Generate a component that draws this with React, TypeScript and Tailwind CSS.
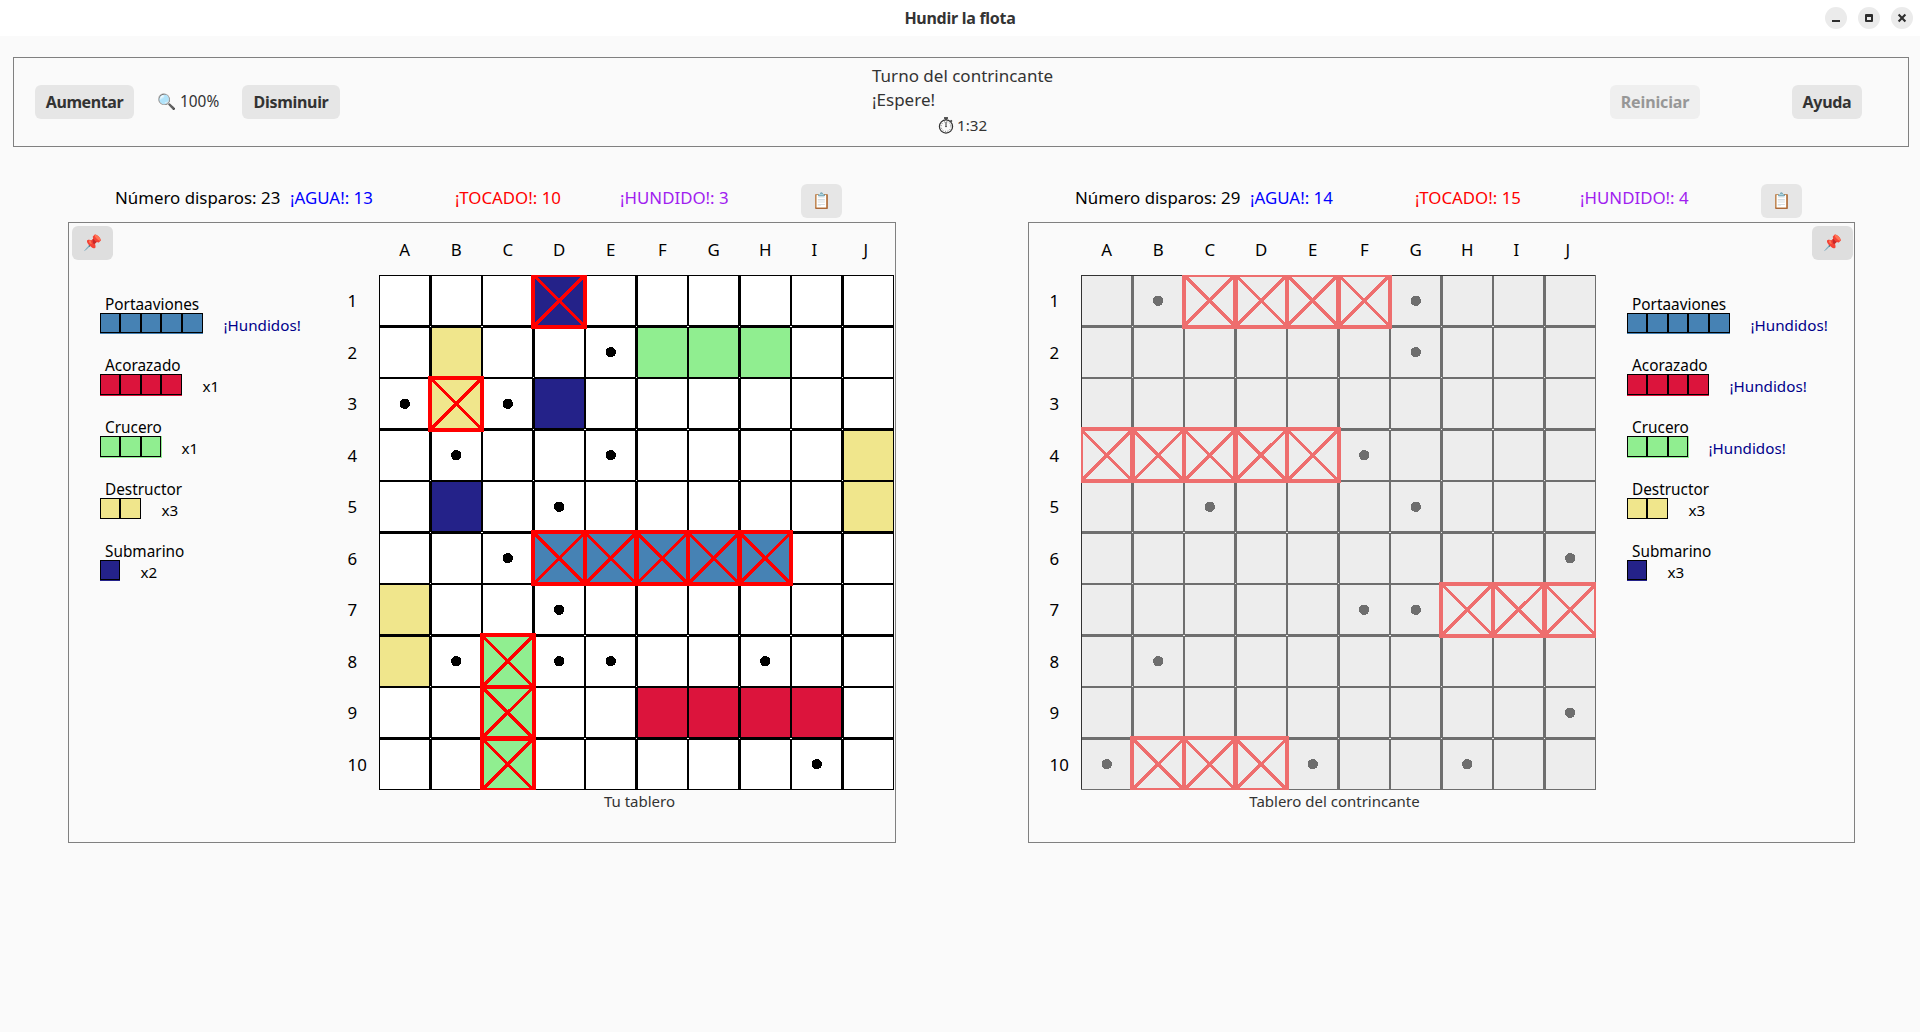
import React from "react";

type Cell = { c: number; r: number };
type Ship = { name: string; size: number; color: string; status: string };
type Board = {
  ships: (Cell & { color: string })[];
  hits: Cell[];
  waters: Cell[];
};

const P = 51.5;
const COLORS = { carrier: "#4682b4", battle: "#dc143c", cruiser: "#90ee90", destroyer: "#f0e68c", sub: "#242289" };

// "D6" -> column 3, row 5
const at = (s: string): Cell => ({ c: s.charCodeAt(0) - 65, r: parseInt(s.slice(1), 10) - 1 });
const cells = (s: string) => s.split(" ").map(at);
const paint = (s: string, color: string) => cells(s).map((x) => ({ ...x, color }));

const own: Board = {
  ships: [
    ...paint("D1 D3 B5", COLORS.sub),
    ...paint("B2 B3 J4 J5 A7 A8", COLORS.destroyer),
    ...paint("F2 G2 H2 C8 C9 C10", COLORS.cruiser),
    ...paint("D6 E6 F6 G6 H6", COLORS.carrier),
    ...paint("F9 G9 H9 I9", COLORS.battle),
  ],
  hits: cells("D1 B3 D6 E6 F6 G6 H6 C8 C9 C10"),
  waters: cells("E2 A3 C3 B4 E4 D5 C6 D7 B8 D8 E8 H8 I10"),
};

const rival: Board = {
  ships: [],
  hits: cells("C1 D1 E1 F1 A4 B4 C4 D4 E4 H7 I7 J7 B10 C10 D10"),
  waters: cells("B1 G1 G2 F4 C5 G5 J6 F7 G7 B8 J9 A10 E10 H10"),
};

const fleet = (st: string[]): Ship[] => [
  { name: "Portaaviones", size: 5, color: COLORS.carrier, status: st[0] },
  { name: "Acorazado", size: 4, color: COLORS.battle, status: st[1] },
  { name: "Crucero", size: 3, color: COLORS.cruiser, status: st[2] },
  { name: "Destructor", size: 2, color: COLORS.destroyer, status: st[3] },
  { name: "Submarino", size: 1, color: COLORS.sub, status: st[4] },
];

function Grid({ board, dim }: { board: Board; dim?: boolean }) {
  const line = dim ? "#6e6e6e" : "#000000";
  const red = dim ? "#ee6e6e" : "#ff0000";
  const inner = [1, 2, 3, 4, 5, 6, 7, 8, 9];
  const odd = [1, 3, 5, 7, 9];
  return (
    <svg width="515" height="515" viewBox="0 0 515 515" shapeRendering="crispEdges" className="block shrink-0">
      <rect width="515" height="515" fill={dim ? "#ededed" : "#ffffff"} />
      {board.ships.map((s) => (
        <rect key={`${s.c}-${s.r}`} x={s.c * P} y={s.r * P} width={P} height={P} fill={s.color} />
      ))}
      {inner.map((i) => {
        const w = i % 2 ? 3 : 2;
        const o = Math.floor(i * P) - 1;
        return (
          <g key={i} fill={line}>
            <rect x={o} y="0" width={w} height="515" />
            <rect x="0" y={o} width="515" height={w} />
          </g>
        );
      })}
      <path d="M0 0.5H515M0.5 0V515" stroke={dim ? "#333333" : "#000000"} fill="none" />
      <path d="M514.5 0V515M0 514.5H515" stroke={line} fill="none" />
      {odd.map((j) =>
        inner.map((i) => (
          <g key={`${i}-${j}`} fill={dim ? "#ededed" : "#ffffff"}>
            <rect x={Math.floor(i * P) - (i % 2 ? 0 : 1)} y={Math.floor(j * P)} width={i % 2 ? 1 : 2} height="1" />
            {i % 2 === 0 && <rect x={Math.floor(j * P)} y={i * P - 1} width="1" height="1" />}
          </g>
        )),
      )}
      {board.waters.map((m) => (
        <circle key={`${m.c}-${m.r}`} cx={m.c * P + 25.7} cy={m.r * P + 25.7} r="5.2" fill={line} />
      ))}
      <g stroke={red} fill="none">
        {board.hits.map((h) => (
          <g key={`${h.c}-${h.r}`}>
            <rect x={Math.floor(h.c * P)} y={Math.floor(h.r * P)} width={P} height={P} strokeWidth="4" />
            <path d={`M${h.c * P} ${h.r * P}l${P} ${P}m0 -${P}l-${P} ${P}`} strokeWidth="3.5" />
          </g>
        ))}
      </g>
    </svg>
  );
}

function Button({ children, className = "" }: { children: React.ReactNode; className?: string }) {
  return (
    <button className={`flex h-[34px] shrink-0 items-center justify-center rounded-[6px] text-[16px] font-bold ${className}`}>
      {children}
    </button>
  );
}

const SPANS = [0, 20, 41, 61, 82, 103];
const HEIGHTS = [0, 20, 21, 21, 21, 20];

function Hull({ size, color }: { size: number; color: string }) {
  const h = HEIGHTS[size];
  return (
    <svg width={SPANS[size] + 1} height="22" shapeRendering="crispEdges" className="shrink-0">
      <rect width={SPANS[size] + (size === 3 ? 1 : 0)} height={size === 2 ? h : h + 1} fill={color} />
      {Array.from({ length: size }, (_, i) => (
        <rect
          key={i}
          x={SPANS[i] + 0.5}
          y="0.5"
          width={SPANS[i + 1] - SPANS[i] - 1}
          height={h - 1}
          fill="none"
          stroke="#000"
        />
      ))}
    </svg>
  );
}

function Fleet({ ships }: { ships: Ship[] }) {
  return (
    <div className="flex flex-col text-[15.35px] text-black">
      {ships.map((s) => (
        <div key={s.name} className="flex h-[62px] flex-col first:h-[61px]">
          <div className="h-[19px] pl-[5px] leading-[21px] whitespace-nowrap">{s.name}</div>
          <div className="flex">
            <Hull size={s.size} color={s.color} />
            <span
              className={`pl-[19.5px] text-[15.2px] leading-[24px] whitespace-nowrap ${s.status.startsWith("x") ? "" : "text-[#00008b]"}`}
            >
              {s.status}
            </span>
          </div>
        </div>
      ))}
    </div>
  );
}

function BoardWithLabels({ board, dim, caption }: { board: Board; dim?: boolean; caption: string }) {
  return (
    <div className="flex w-[548px] shrink-0 flex-col">
      <div className="flex h-[52px] pl-[33px] text-[16.85px] text-black">
        {"ABCDEFGHIJ".split("").map((l, i) => (
          <div key={l} className={`w-[51.5px] shrink-0 pt-[15px] text-center leading-[24px] ${i > 7 ? "pr-[5px]" : ""}`}>
            {l}
          </div>
        ))}
      </div>
      <div className="flex">
        <div className="flex w-[33px] shrink-0 flex-col text-[16.85px] text-black">
          {Array.from({ length: 10 }, (_, i) => (
            <div key={i} className="flex h-[51.5px] items-center pl-[1.5px]">{i + 1}</div>
          ))}
        </div>
        <Grid board={board} dim={dim} />
      </div>
      <div className={`h-[24px] text-center text-[15px] leading-[23px] text-[#333333] ${dim ? "pl-[25px]" : "pl-[39px]"}`}>
        {caption}
      </div>
    </div>
  );
}

function EmojiButton({ glyph, className }: { glyph: string; className: string }) {
  return (
    <Button className={`w-[41px] pb-[2px] ${className}`}>
      <span className="text-[15.2px] font-normal">{glyph}</span>
    </Button>
  );
}

function Stats({ n, a, t, h }: { n: number; a: number; t: number; h: number }) {
  return (
    <div className="flex h-[38px] pl-[47px] text-[16.85px] leading-[27px] whitespace-nowrap">
      <div className="w-[175px] text-black">Número disparos: {n}</div>
      <div className="w-[165px] text-[#0000ff]">¡AGUA!: {a}</div>
      <div className="w-[165px] text-[#ff0000]">¡TOCADO!: {t}</div>
      <div className="w-[181px] text-[#a020f0]">¡HUNDIDO!: {h}</div>
      <EmojiButton glyph="📋" className="bg-[#e6e6e6]" />
    </div>
  );
}

const Stopwatch = () => (
  <svg width="16" height="17" viewBox="0 0 16 17" fill="none" stroke="#333333">
    <circle cx="8" cy="9.5" r="6.6" strokeWidth="1.2" />
    <path d="M6 1h4" strokeWidth="1.6" />
    <path d="M8 1.5v1.5M12.6 3.2l1.4 1.3" strokeWidth="1.3" />
    <path d="M8 5v5" strokeWidth="1" />
    <circle cx="8" cy="9.6" r="0.7" fill="#333333" stroke="none" />
    <circle cx="8" cy="9.5" r="4.9" strokeWidth="0.8" strokeDasharray="0.8 1.766" />
  </svg>
);

export default function App() {
  return (
    <div className="flex h-[1032px] w-[1920px] flex-col overflow-hidden bg-[#fafafa] font-['Noto_Sans',sans-serif] text-[#333333]">
      <header className="flex h-[36px] shrink-0 items-center justify-between bg-white px-[7px]">
        <span className="w-[88px]" />
        <h1 className="text-[16px] font-bold tracking-[-0.27px] text-[#333333]">Hundir la flota</h1>
        <div className="flex gap-[11px]">
          <span className="h-[22px] w-[22px] rounded-full bg-[#ebebeb]">
            <svg width="22" height="22" stroke="#2e2e2e" fill="none"><path d="M7 14H15" strokeWidth="2" /></svg>
          </span>
          <span className="h-[22px] w-[22px] rounded-full bg-[#ebebeb]">
            <svg width="22" height="22" stroke="#2e2e2e" fill="none">
              <path d="M8 8h6v6h-6z" strokeWidth="2" strokeLinejoin="round" />
              <path d="M8 9.5h6" strokeWidth="1" />
            </svg>
          </span>
          <span className="h-[22px] w-[22px] rounded-full bg-[#ebebeb]">
            <svg width="22" height="22" stroke="#2e2e2e" fill="none"><path d="M7.6 7.6L14.4 14.4M14.4 7.6L7.6 14.4" strokeWidth="2.1" /></svg>
          </span>
        </div>
      </header>

      <section className="mx-[13px] mt-[21px] flex h-[90px] w-[1896px] shrink-0 border border-[#808080] pl-[21px]">
        <div className="flex w-[837px] items-center">
          <Button className="w-[99px] bg-[#e6e6e6] tracking-[-0.4px]">Aumentar</Button>
          <span className="w-[108px] pl-[23px] text-[15.4px] whitespace-nowrap">🔍 100%</span>
          <Button className="w-[98px] bg-[#e6e6e6] tracking-[-0.3px]">Disminuir</Button>
        </div>
        <div className="flex w-[183px] flex-col pt-[6px] text-[17px] leading-[24px] whitespace-nowrap">
          <div>Turno del contrincante</div>
          <div>¡Espere!</div>
          <div className="flex items-center gap-[3px] pt-px pl-[66px] text-[15.2px]">
            <Stopwatch />
            <span>1:32</span>
          </div>
        </div>
        <div className="flex flex-1 items-center justify-end pr-[46px]">
          <Button className="mr-[92px] w-[90px] bg-[#efefef] tracking-[-0.15px] text-[#979797]">Reiniciar</Button>
          <Button className="w-[70px] bg-[#e6e6e6] tracking-[-0.3px]">Ayuda</Button>
        </div>
      </section>

      <main className="flex gap-[132px] pt-[37px] pl-[68px]">
        <section className="w-[828px]">
          <Stats n={23} a={13} t={10} h={3} />
          <div className="flex h-[621px] w-[828px] border border-[#808080]">
            <div className="w-[277px] shrink-0 pt-[3px] pl-[3px]">
              <EmojiButton glyph="📌" className="bg-[#dedede]" />
              <div className="pt-[34px] pl-[28px]">
                <Fleet ships={fleet(["¡Hundidos!", "x1", "x1", "x3", "x2"])} />
              </div>
            </div>
            <BoardWithLabels board={own} caption="Tu tablero" />
          </div>
        </section>
        <section className="w-[827px]">
          <Stats n={29} a={14} t={15} h={4} />
          <div className="flex h-[621px] w-[827px] border border-[#808080] pl-[19px]">
            <BoardWithLabels board={rival} dim caption="Tablero del contrincante" />
            <div className="flex flex-1 flex-col pt-[3px] pr-px">
              <div className="flex justify-end"><EmojiButton glyph="📌" className="bg-[#dedede]" /></div>
              <div className="pt-[34px] pl-[31px]">
                <Fleet ships={fleet(["¡Hundidos!", "¡Hundidos!", "¡Hundidos!", "x3", "x3"])} />
              </div>
            </div>
          </div>
        </section>
      </main>
    </div>
  );
}
